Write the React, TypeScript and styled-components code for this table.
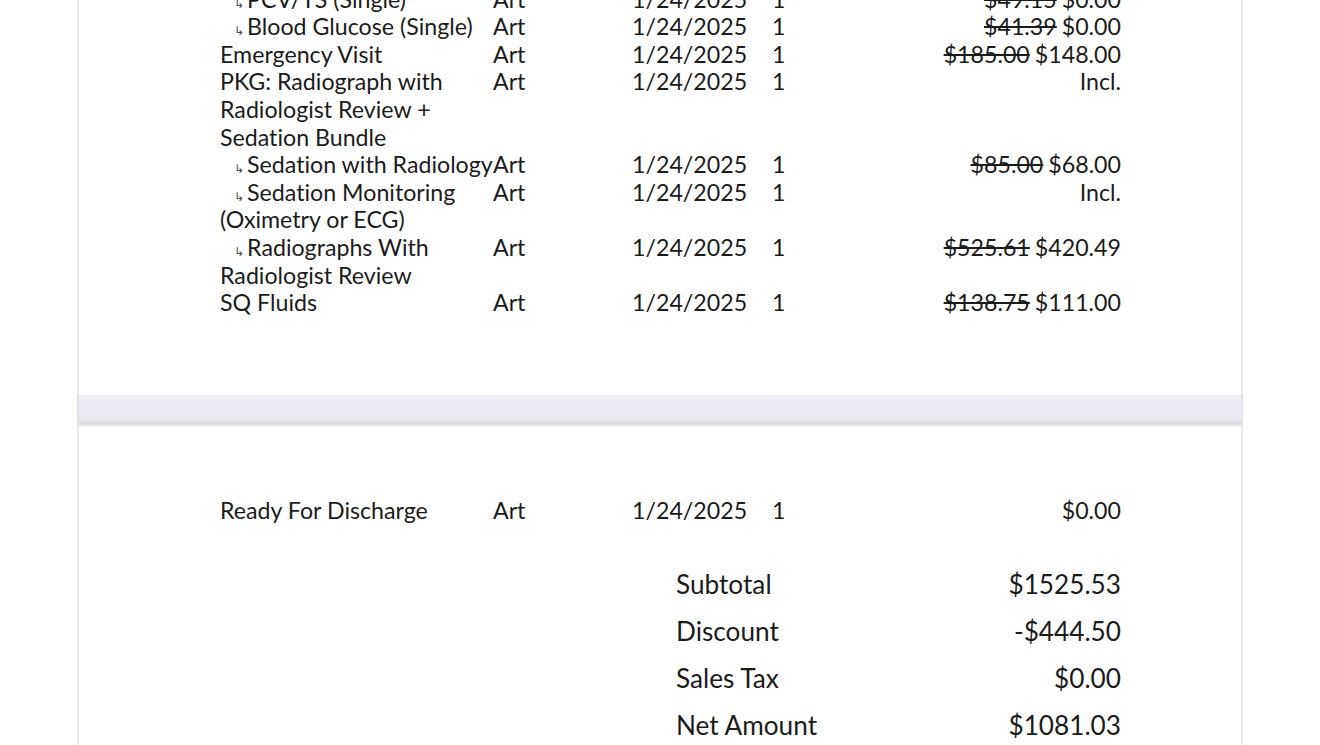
import styled, { createGlobalStyle } from 'styled-components'

const GlobalStyle = createGlobalStyle`
  body {
    margin: 0;
    background: #ffffff;
    font-family: Lato, "Open Sans", "Liberation Sans", sans-serif;
    font-variant-ligatures: none;
    color: #1b1b1b;
  }
`

interface LineItem {
  name: string
  sub?: boolean
  doctor: string
  date: string
  qty: string
  was?: string
  price: string
}

const firstPageItems: LineItem[] = [
  { name: 'PCV/TS (Single)', sub: true, doctor: 'Art', date: '1/24/2025', qty: '1', was: '$49.15', price: '$0.00' },
  { name: 'Blood Glucose (Single)', sub: true, doctor: 'Art', date: '1/24/2025', qty: '1', was: '$41.39', price: '$0.00' },
  { name: 'Emergency Visit', doctor: 'Art', date: '1/24/2025', qty: '1', was: '$185.00', price: '$148.00' },
  { name: 'PKG: Radiograph with Radiologist Review + Sedation Bundle', doctor: 'Art', date: '1/24/2025', qty: '1', price: 'Incl.' },
  { name: 'Sedation with Radiology', sub: true, doctor: 'Art', date: '1/24/2025', qty: '1', was: '$85.00', price: '$68.00' },
  { name: 'Sedation Monitoring (Oximetry or ECG)', sub: true, doctor: 'Art', date: '1/24/2025', qty: '1', price: 'Incl.' },
  { name: 'Radiographs With Radiologist Review', sub: true, doctor: 'Art', date: '1/24/2025', qty: '1', was: '$525.61', price: '$420.49' },
  { name: 'SQ Fluids', doctor: 'Art', date: '1/24/2025', qty: '1', was: '$138.75', price: '$111.00' },
]

const secondPageItems: LineItem[] = [
  { name: 'Ready For Discharge', doctor: 'Art', date: '1/24/2025', qty: '1', price: '$0.00' },
]

const totals = [
  ['Subtotal', '$1525.53'],
  ['Discount', '-$444.50'],
  ['Sales Tax', '$0.00'],
  ['Net Amount', '$1081.03'],
]

const Viewer = styled.div`
  height: 745px;
  overflow: hidden;
  display: flex;
  flex-direction: column;
  align-items: center;
`

const Sheet = styled.section<{ $top: string; $bottom: string }>`
  box-sizing: border-box;
  width: 1166px;
  flex-shrink: 0;
  background: #ffffff;
  border-left: 2px solid #ececee;
  border-right: 2px solid #ececee;
  padding: ${p => p.$top} 120px ${p => p.$bottom} 141px;
`

/* the document is scrolled, so the first sheet starts above the window */
const ScrolledSheet = styled(Sheet)`
  margin-top: -14.4px;
`

const PageGap = styled.div`
  box-sizing: border-box;
  width: 1166px;
  height: 33px;
  flex-shrink: 0;
  border-left: 2px solid #e2e2e8;
  border-right: 2px solid #e2e2e8;
  background: linear-gradient(
    to bottom,
    #f6f6f8 0px,
    #efeff3 2px,
    #ebebf2 6px,
    #ebebf3 24px,
    #e4e4ea 27px,
    #d7d7dd 30px,
    #e8e8ec 31px,
    #f7f7f9 33px
  );
`

const ItemRow = styled.div`
  display: grid;
  grid-template-columns: 273px 139px 140px 100px 1fr;
  font-size: 23.2px;
  line-height: 27.6px;
`

const NameCell = styled.div<{ $nowrap?: boolean }>`
  white-space: ${p => (p.$nowrap ? 'nowrap' : 'normal')};
`

const SubArrow = styled.span`
  display: inline-block;
  margin-left: 14px;
  margin-right: 3px;
  font-family: "DejaVu Sans", sans-serif;
  font-size: 12px;
  line-height: 1;
  color: #4a4a4a;
`

const PriceCell = styled.div`
  text-align: right;
  white-space: nowrap;
`

const WasPrice = styled.s`
  margin-right: 5px;
`

const TotalsBlock = styled.div`
  margin: 36px 0 0 auto;
  width: 445px;
`

const TotalRow = styled.div`
  display: grid;
  grid-template-columns: 1fr auto;
  align-items: center;
  height: 47px;
  font-size: 26.2px;
`

function Item({ item }: { item: LineItem }) {
  return (
    <ItemRow>
      <NameCell $nowrap={item.name === 'Sedation with Radiology'}>
        {item.sub && <SubArrow>↳</SubArrow>}
        {item.name}
      </NameCell>
      <div>{item.doctor}</div>
      <div>{item.date}</div>
      <div>{item.qty}</div>
      <PriceCell>
        {item.was && <WasPrice>{item.was}</WasPrice>}
        {item.price}
      </PriceCell>
    </ItemRow>
  )
}

function App() {
  return (
    <>
      <GlobalStyle />
      <Viewer>
        <ScrolledSheet $top="0px" $bottom="77px">
          {firstPageItems.map(item => (
            <Item key={item.name} item={item} />
          ))}
        </ScrolledSheet>
        <PageGap />
        <Sheet $top="70px" $bottom="60px">
          {secondPageItems.map(item => (
            <Item key={item.name} item={item} />
          ))}
          <TotalsBlock>
            {totals.map(([label, value]) => (
              <TotalRow key={label}>
                <span>{label}</span>
                <span>{value}</span>
              </TotalRow>
            ))}
          </TotalsBlock>
        </Sheet>
      </Viewer>
    </>
  )
}

export default App
